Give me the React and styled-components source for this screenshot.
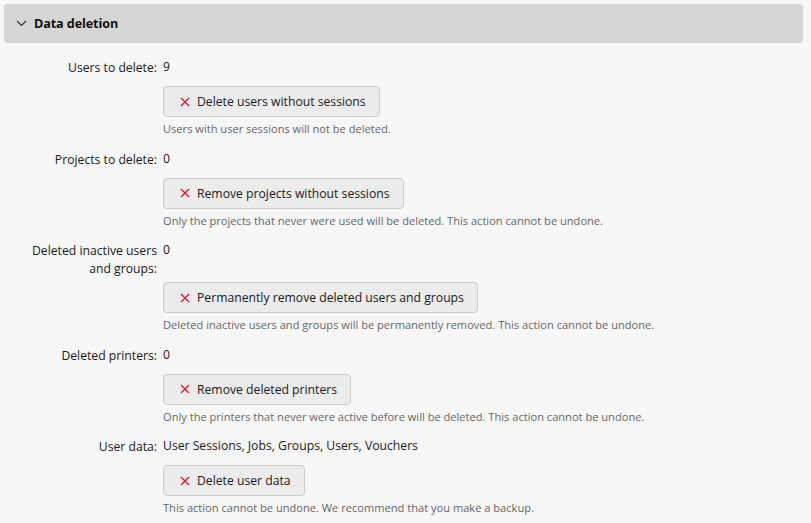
import React from 'react'
import styled, { createGlobalStyle } from "styled-components"

const GlobalStyle = createGlobalStyle`
  html, body {
    margin: 0;
    padding: 0;
    background: #f7f7f7;
  }
  body {
    font-family: "Open Sans", "Noto Sans", sans-serif;
    color: #1a1a1a;
  }
`;

const rows = [
  {
    label: "Users to delete:",
    value: "9",
    action: "Delete users without sessions",
    hint: "Users with user sessions will not be deleted.",
  },
  {
    label: "Projects to delete:",
    value: "0",
    action: "Remove projects without sessions",
    hint: "Only the projects that never were used will be deleted. This action cannot be undone.",
  },
  {
    label: "Deleted inactive users and groups:",
    value: "0",
    action: "Permanently remove deleted users and groups",
    hint: "Deleted inactive users and groups will be permanently removed. This action cannot be undone.",
  },
  {
    label: "Deleted printers:",
    value: "0",
    action: "Remove deleted printers",
    hint: "Only the printers that never were active before will be deleted. This action cannot be undone.",
  },
  {
    label: "User data:",
    value: "User Sessions, Jobs, Groups, Users, Vouchers",
    action: "Delete user data",
    hint: "This action cannot be undone. We recommend that you make a backup.",
  },
];

const Chevron = () => (
  <svg width="11" height="7" viewBox="0 0 11 7">
    <polyline points="1,1 5.5,5.5 10,1" fill="none" stroke="#333" strokeWidth="1.2" />
  </svg>
);

const Cross = () => (
  <svg width="10" height="10" viewBox="0 0 10 10">
    <line x1="1" y1="1" x2="9" y2="9" stroke="#d81f3a" strokeWidth="1.4" />
    <line x1="9" y1="1" x2="1" y2="9" stroke="#d81f3a" strokeWidth="1.4" />
  </svg>
);

const App = () => {
  return (
    <Page>
      <GlobalStyle />
      <Header>
        <Chevron />
        <Title>Data deletion</Title>
      </Header>
      <Form>
        {rows.map((r) => (
          <React.Fragment key={r.label}>
            <Label>{r.label}</Label>
            <Value>{r.value}</Value>
            <Controls>
              <ActionButton>
                <Cross />
                {r.action}
              </ActionButton>
              <Hint>{r.hint}</Hint>
            </Controls>
          </React.Fragment>
        ))}
      </Form>
    </Page>
  )
};

const Page = styled.div`
  width: 811px;
  height: 523px;
  padding: 4px 8px 0 4px;
  box-sizing: border-box;
  overflow: hidden;
`;

const Header = styled.div`
  height: 39px;
  background: #d6d6d6;
  border-radius: 4px;
  display: flex;
  align-items: center;
  gap: 7px;
  padding-left: 12px;
`;

const Title = styled.span`
  font-weight: 700;
  font-size: 12.6px;
  letter-spacing: -0.1px;
  color: #111;
`;

const Form = styled.div`
  display: grid;
  grid-template-columns: 153px 1fr;
  column-gap: 6px;
  padding-top: 15px;
`;

const Label = styled.div`
  grid-column: 1;
  text-align: right;
  font-size: 12.2px;
  line-height: 18px;
  padding-top: 1px;
  color: #1a1a1a;
  padding-left: 26px;
`;

const Value = styled.div`
  grid-column: 2;
  font-size: 12.2px;
  line-height: 18px;
  min-height: 24px;
  color: #1a1a1a;
`;

const Controls = styled.div`
  grid-column: 2;
  padding-top: 4px;
  padding-bottom: 12.5px;
  display: flex;
  flex-direction: column;
  align-items: flex-start;
`;

const ActionButton = styled.button`
  display: inline-flex;
  align-items: center;
  gap: 7px;
  height: 31px;
  padding: 0 13px 0 16px;
  background: #ececec;
  border: 1px solid #cacaca;
  border-radius: 4px;
  font-family: inherit;
  font-size: 12.2px;
  color: #1a1a1a;
  cursor: pointer;
`;

const Hint = styled.div`
  margin-top: 4px;
  font-size: 11.1px;
  line-height: 16px;
  color: #666;
`;

export default App
